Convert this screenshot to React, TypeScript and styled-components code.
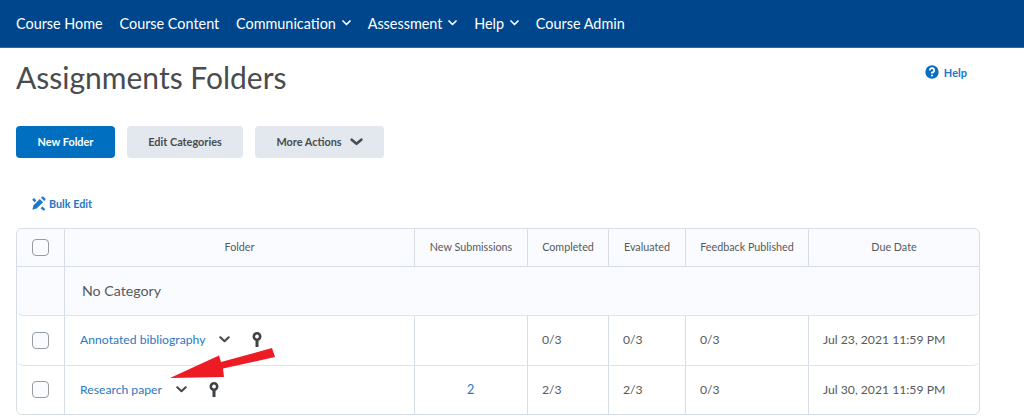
import React from "react";
import styled, { createGlobalStyle } from "styled-components";

const Global = createGlobalStyle`
  html, body { margin: 0; padding: 0; background: #fff; }
  body { font-family: Lato, "Liberation Sans", sans-serif; color: #494c4e; width: 1024px; height: 420px; overflow: hidden; }
`;
const Page = styled.div`position: relative; width: 1024px; height: 420px; overflow: hidden;`;
const Nav = styled.nav`
  height: 48px; box-sizing: border-box; background: #00468c; border-bottom: 1px solid #2f6aa5;
  display: flex; align-items: center; gap: 16.8px; padding: 0 0 1px 16px; color: #fff; font-size: 14.4px;
`;
const NavItem = styled.span`display: inline-flex; align-items: center; gap: 6px; white-space: nowrap;`;
const Header = styled.header`
  display: flex; justify-content: space-between; align-items: flex-start; height: 78px; padding: 0 57px 0 16px;
`;
const Title = styled.h1`margin: 7px 0 0; font-size: 30px; line-height: 44px; font-weight: 400; color: #494c4e;`;
const HelpLink = styled.a`
  display: inline-flex; align-items: center; gap: 5px; margin-top: 17px; font-size: 11px; font-weight: 700; color: #1c78c7;
`;
const Actions = styled.div`display: flex; gap: 12px; padding-left: 16px;`;
const Btn = styled.button<{ $primary?: boolean; $w: number }>`
  width: ${p => p.$w}px; height: 32px; box-sizing: border-box; border: none; border-radius: 4px;
  background: ${p => (p.$primary ? "#006fbf" : "#e3e8ef")}; color: ${p => (p.$primary ? "#fff" : "#494c4e")};
  font: 700 10.9px Lato, sans-serif; display: inline-flex; align-items: center; justify-content: center; gap: 8px; padding: 0 0 1px;
`;
const BulkEdit = styled.a`
  display: flex; align-items: center; gap: 3px; margin: 37px 0 0 31px; height: 16px; font-size: 10.8px; font-weight: 700; color: #1c78c7;
`;
const Table = styled.table`
  margin: 17px 0 0 16px; width: 964px; table-layout: fixed; border-collapse: separate; border-spacing: 0;
  border: 1px solid #d6dde6; border-radius: 6px; font-size: 12.2px;
`;
const Th = styled.th`
  height: 38px; padding: 0 0 2px; box-sizing: border-box; background: #f9fbff; font-weight: 400; font-size: 10.75px; color: #565a5c;
  border-bottom: 1px solid #d6dde6; border-left: 1px solid #d6dde6; text-align: center;
  &:first-child { border-left: none; border-top-left-radius: 6px; padding: 0; }
  &:last-child { border-top-right-radius: 6px; }
`;
const Td = styled.td<{ $h?: number; $tint?: boolean }>`
  height: ${p => p.$h ?? 50}px; padding: 0 0 3px 14px; box-sizing: border-box; border-left: 1px solid #d6dde6; border-bottom: 1px solid #dfe4ea;
  background: ${p => (p.$tint ? "#f9fbff" : "#fff")}; color: #565a5c;
  tr:last-child > & { border-bottom: none; background: #fff; padding-bottom: 2px; }
  &:first-child { border-left: none; padding: 0; text-align: center; border-bottom-left-radius: 6px; }
  &:last-child { border-bottom-right-radius: 6px; }
`;
const CategoryCell = styled(Td)`padding-left: 17px; padding-bottom: 1px; font-size: 14.2px;`;
const FolderCell = styled(Td)`padding-left: 15px;`;
const Check = styled.span`
  display: inline-block; width: 15px; height: 15px; border: 1px solid #959ca1; border-radius: 4px; background: #f9fbff; vertical-align: middle;
`;
const FolderLine = styled.div`display: flex; align-items: center;`;
const Link = styled.a`color: #2a79bf; font-size: 12.2px; white-space: nowrap;`;
const Count = styled(Link)`display: block; text-align: center; padding-right: 15px; font-size: 12.5px;`;
const Chevron = styled.svg<{ $ml: number }>`margin-left: ${p => p.$ml}px; flex: none;`;
const KeyIcon = styled.svg<{ $ml: number }>`margin-left: ${p => p.$ml}px; flex: none;`;
const ArrowOverlay = styled.svg`position: absolute; left: 165px; top: 345px; pointer-events: none;`;

const NavChevron = () => (
  <svg width="9" height="6" viewBox="0 0 9 6"><path d="M1 1l3.5 3.5L8 1" fill="none" stroke="#fff" strokeWidth="1.7" strokeLinecap="round" strokeLinejoin="round" /></svg>
);
const RowChevron = ({ ml }: { ml: number }) => (
  <Chevron $ml={ml} width="11" height="7" viewBox="0 0 11 7"><path d="M1.3 1.3L5.5 5.2 9.7 1.3" fill="none" stroke="#494c4e" strokeWidth="2.2" strokeLinecap="round" strokeLinejoin="round" /></Chevron>
);
const Key = ({ ml }: { ml: number }) => (
  <KeyIcon $ml={ml} width="10" height="15" viewBox="0 0 10 15">
    <circle cx="5" cy="4.5" r="3.2" fill="none" stroke="#3f4345" strokeWidth="2.6" />
    <rect x="3.5" y="7" width="3" height="8" fill="#3f4345" />
  </KeyIcon>
);

export default function App() {
  return (
    <Page>
      <Global />
      <Nav>
        <NavItem>Course Home</NavItem>
        <NavItem>Course Content</NavItem>
        <NavItem>Communication <NavChevron /></NavItem>
        <NavItem>Assessment <NavChevron /></NavItem>
        <NavItem>Help <NavChevron /></NavItem>
        <NavItem>Course Admin</NavItem>
      </Nav>
      <Header>
        <Title>Assignments Folders</Title>
        <HelpLink>
          <svg width="14" height="14" viewBox="0 0 14 14">
            <circle cx="7" cy="7" r="6.7" fill="#0b6fbd" />
            <path d="M4.8 5.4A2.2 2.2 0 1 1 7 7.5V8.5" fill="none" stroke="#fff" strokeWidth="1.7" />
            <circle cx="7" cy="10.6" r="1" fill="#fff" />
          </svg>
          Help
        </HelpLink>
      </Header>
      <Actions>
        <Btn $primary $w={99}>New Folder</Btn>
        <Btn $w={116}>Edit Categories</Btn>
        <Btn $w={129}>More Actions
          <svg width="13" height="8" viewBox="0 0 13 8"><path d="M1.7 1.7L6.5 5.8l4.8-4.1" fill="none" stroke="#494c4e" strokeWidth="2.6" strokeLinecap="round" strokeLinejoin="round" /></svg>
        </Btn>
      </Actions>
      <BulkEdit>
        <svg width="15" height="15" viewBox="0 0 15 15">
          <path d="M2.4 9.4L8.8 3l3.2 3.2-6.4 6.4-4.2 1.2z" fill="#1c78c7" />
          <path d="M10 1.8l1-1a1 1 0 0 1 1.4 0l1.8 1.8a1 1 0 0 1 0 1.4l-1 1z" fill="#1c78c7" />
          <path d="M1.2 3.8L3 2l2.4 2.4-1.8 1.8zM9.6 12.2l1.8-1.8 2.4 2.4v1.6h-1.6z" fill="#1c78c7" />
        </svg>
        Bulk Edit
      </BulkEdit>
      <Table>
        <colgroup>
          <col style={{ width: 47 }} />
          <col style={{ width: 350 }} />
          <col style={{ width: 113 }} />
          <col style={{ width: 81 }} />
          <col style={{ width: 77 }} />
          <col style={{ width: 123 }} />
          <col />
        </colgroup>
        <thead>
          <tr>
            <Th><Check /></Th>
            <Th>Folder</Th>
            <Th>New Submissions</Th>
            <Th>Completed</Th>
            <Th>Evaluated</Th>
            <Th>Feedback Published</Th>
            <Th>Due Date</Th>
          </tr>
        </thead>
        <tbody>
          <tr>
            <Td $h={49} $tint />
            <CategoryCell $h={49} $tint colSpan={6}>No Category</CategoryCell>
          </tr>
          <tr>
            <Td><Check /></Td>
            <FolderCell><FolderLine><Link>Annotated bibliography</Link><RowChevron ml={14} /><Key ml={22} /></FolderLine></FolderCell>
            <Td />
            <Td>0/3</Td>
            <Td>0/3</Td>
            <Td>0/3</Td>
            <Td>Jul 23, 2021 11:59 PM</Td>
          </tr>
          <tr>
            <Td $h={48}><Check /></Td>
            <FolderCell $h={48}><FolderLine><Link>Research paper</Link><RowChevron ml={14} /><Key ml={22} /></FolderLine></FolderCell>
            <Td $h={48}><Count>2</Count></Td>
            <Td $h={48}>2/3</Td>
            <Td $h={48}>2/3</Td>
            <Td $h={48}>0/3</Td>
            <Td $h={48}>Jul 30, 2021 11:59 PM</Td>
          </tr>
        </tbody>
      </Table>
      <ArrowOverlay width="112" height="40" viewBox="0 0 112 40">
        <path d="M5 33L54 10.5 56 17 107 3 110 12 58 23.5 59 32z" fill="#ed1c24" />
      </ArrowOverlay>
    </Page>
  );
}
